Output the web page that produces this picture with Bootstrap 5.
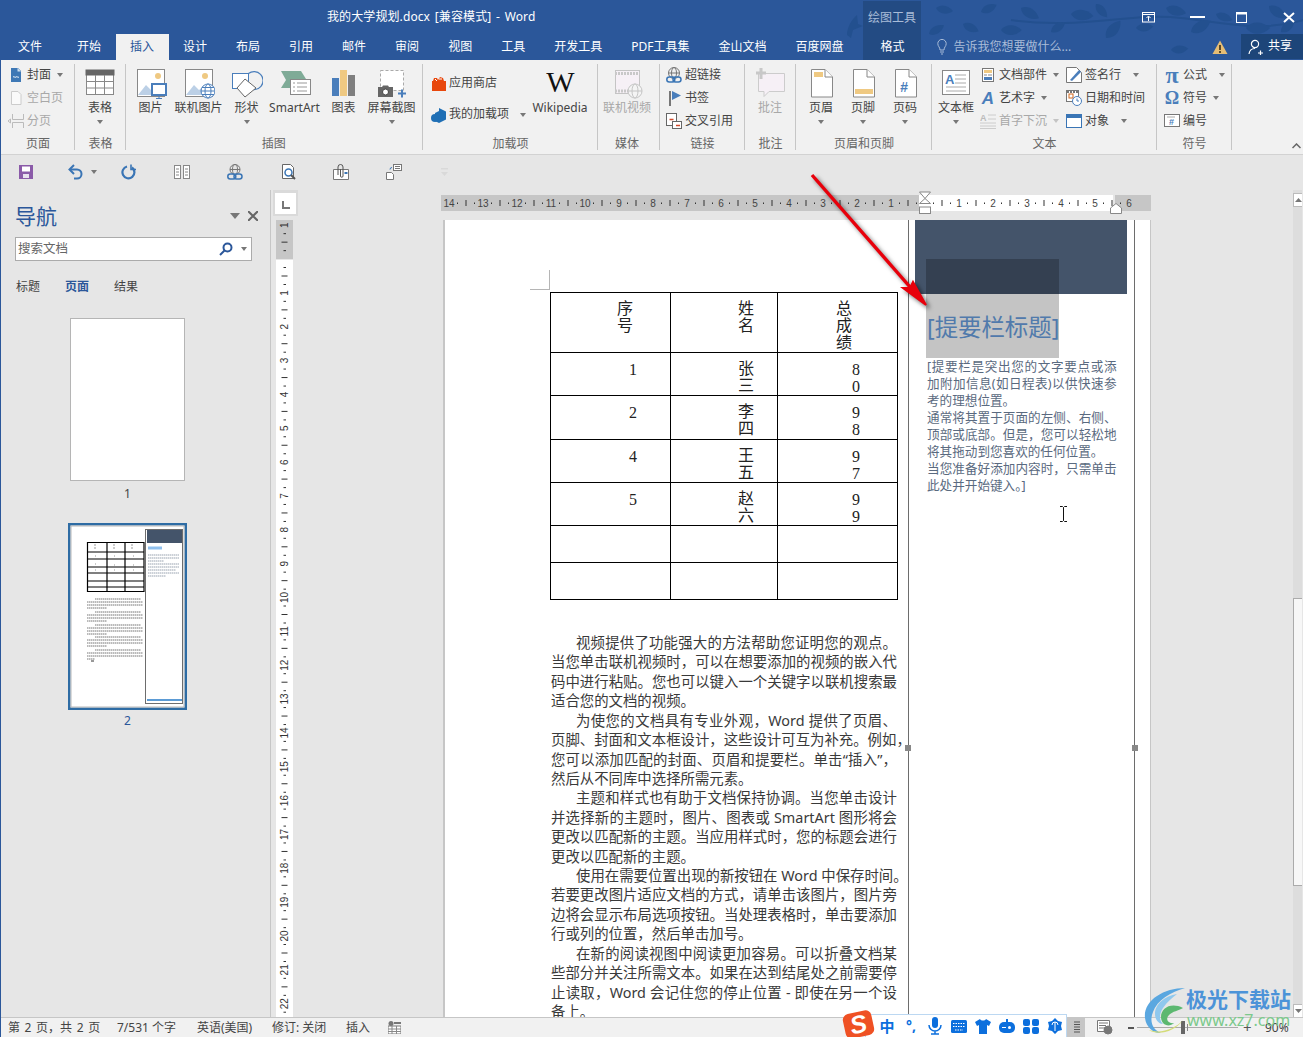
<!DOCTYPE html>
<html lang="zh-CN">
<head>
<meta charset="utf-8">
<title>Word</title>
<link href="https://cdn.jsdelivr.net/npm/bootstrap@5.3.0/dist/css/bootstrap.min.css" rel="stylesheet">
<style>
html,body{margin:0;height:1037px;overflow:hidden}
body{font-family:"Noto Sans","Noto Sans CJK SC",sans-serif;font-size:12px;color:#444;background:#e6e6e6;line-height:1.2}
.win{width:1303px;height:1037px;border-left:1px solid #2b579a;position:relative;overflow:hidden}
.head{height:60px;background:#2b579a;color:#fff;position:relative}
.leaves{position:absolute;left:0;top:0;pointer-events:none}
.trow{height:34px;position:relative}
.ttl{width:862px;padding-left:326px;line-height:33px;white-space:nowrap;letter-spacing:.1px;word-spacing:1.5px}
.toolhd{width:58px;height:33px;margin-top:1px;background:#234b83;color:#a9bcd8;text-align:center;line-height:33px}
.wb1{margin-left:221px}.wb2{margin-left:35px}.wb3{margin-left:31px}.wb4{margin-left:36px}
.tabs{height:26px;position:relative}
.tb{padding:0 14.5px;line-height:25px;white-space:nowrap}
.tb.first{margin-left:2.5px;margin-right:6px}
.tb.on{background:#f1f1f1;color:#2b579a}
.tb.fmt{margin-left:5.5px;width:58px;padding:0;text-align:center;background:#234b83}
.lamp{margin-left:16px}
.tell{margin-left:6px;color:#a9bcd8}
.warn{margin-left:auto;margin-right:13px}
.share{width:62px;height:25px;background:#1d4579;gap:5px;padding-left:7px}
.rib{height:95px;background:#f1f1f1;border-bottom:1px solid #d2d2d2;position:relative}
.grp{height:94px;position:relative;flex:none}
.grp::after{content:"";position:absolute;right:0;top:4px;bottom:4px;width:1px;background:#c6c6c6}
.rbody{height:73px}
.rlab{height:20px;line-height:22px;text-align:center;color:#666}
.g1{width:74px}.g2{width:51px}.g3{width:297px;padding-left:.5px}.g4{width:175px}.g5{width:62px}.g6{width:85px}.g7{width:51px}.g8{width:136px}.g9{width:225px}.g10{width:75px}
.g5 .rlab{padding-right:4px}
.g3 .rlab{padding-right:2px}
.bb{display:flex;flex-direction:column;align-items:center;padding-top:7px;flex:none}
.bi{height:31px;display:flex;justify-content:center}
.bl{height:20px;line-height:20px;white-space:nowrap}
.tri{display:block;width:0;height:0;border-left:3.5px solid transparent;border-right:3.5px solid transparent;border-top:4px solid #777;flex:none}
.bb>.tri{margin-top:2px}
.sr>.tri{margin-left:3px}
.sr>.tri.far{margin-left:8.5px}
.w46{width:46px}.w48{width:48px}.w50{width:50px}.w58{width:58px}.w42{width:42px}
.hgap{margin-left:4px}
.sc{padding-top:3.5px;flex:none}
.sr{height:23px;display:flex;align-items:center;white-space:nowrap;gap:3px}
.sr svg{flex:none}
.sr.tall{height:31px;gap:2px}
.dis{color:#a8a8a8}.dis .tri{border-top-color:#c4c4c4}
.p1{padding-left:7px}.p2{padding-left:8px;padding-top:8px;width:108px}.p3{padding-left:6px}.p4{width:86px}.p5{padding-left:7px}
.wtx{font-family:"Liberation Serif",serif;font-size:30px;line-height:29px;color:#111;padding-left:1px}
.ico{font-family:"Liberation Serif",serif;font-weight:700;font-size:18px;color:#4a7ebb;width:16px;text-align:center;line-height:1}
.ico.big{font-size:24px;line-height:16px}
.ico.wa{font-family:"Liberation Sans",sans-serif;font-style:italic;font-size:17px}
.chev{position:absolute;left:1291px;top:83px}
.qat{height:35px;background:#e6e6e6;padding-bottom:2px}
.qat>:nth-child(1){margin-left:17px}.qat>:nth-child(2){margin-left:34px}.qat>:nth-child(3){margin-left:7px}.qat>:nth-child(4){margin-left:24px}.qat>:nth-child(5){margin-left:37px}.qat>:nth-child(6){margin-left:37px}.qat>:nth-child(7){margin-left:38px}.qat>:nth-child(8){margin-left:36px}.qat>:nth-child(9){margin-left:37px}.qat>:nth-child(10){margin-left:39px}
.main{height:827px;overflow:hidden}
.nav-pane{width:270px;flex:none;border-right:1px solid #c6c6c6;padding-top:14px;height:827px}
.nhd{height:24px;padding-left:14px;color:#2b579a;font-size:21px;line-height:24px;width:257px}
.nsearch{margin:9px 0 0 14px;width:237px;height:24px;background:#fff;border:1px solid #ababab;padding:0 4px 0 2px;color:#666;font-size:12.5px;line-height:22px}
.ntabs{margin-top:15px;height:20px;line-height:22px;padding-left:15px;gap:25px}
.ntabs b{color:#2b579a}
.thumbs{width:253px;display:flex;flex-direction:column;align-items:center}
.th1{margin-top:22px;width:115px;height:163px;background:#fff;border:1px solid #b5b5b5}
.thn{height:24px;line-height:26px}
.th2{margin-top:18px;height:187px;width:119px}
.thn2{height:20px;line-height:22px;color:#2b579a}
.vrul{width:29px;flex:none;height:827px;position:relative}
.corner{margin:0 0 4px 2px;width:25px;height:26px;background:#dadada;padding:3px 2px 2px 2px}
.cornerin{background:#fff;height:21px;width:21px;position:relative}
.cornerin::before{content:"";position:absolute;left:7px;top:8px;width:8px;height:8px;border-left:2px solid #777;border-bottom:2px solid #777}
.vrs{margin-left:5px;display:block}
.dv{width:993px;flex:none;padding:5px 0 0 141px;height:827px;overflow:hidden}
.hr-svg{display:block;overflow:visible}
.page{margin:9px 0 0 2px;width:708px;height:797px;background:#fff;border-left:2px solid #c6c6c6;border-right:1px solid #c6c6c6}
.pl{width:463px;flex:none;padding:72px 0 0 105px;position:relative;font-size:14.4px;color:#3a3a3a}
.crop{position:absolute;left:85px;top:50px;width:20px;height:20px;border-right:1px solid #b5b5b5;border-bottom:1px solid #b5b5b5}
.dtb{width:348px;table-layout:fixed;margin:0;--bs-table-border-color:#000;--bs-table-color:#222;--bs-table-bg:transparent;font-size:16px;line-height:17px;border-color:#000}
.dtb>tbody>tr>td{padding:7px 0 0 0;vertical-align:top;border:1px solid #000;white-space:nowrap}
.dtb td.c1{width:120px;padding-left:66px}
.dtb td.c2{width:107px;padding-left:67px}
.dtb td.c3{width:120px;padding-left:58px}
.dtb>tbody>tr>td.d1{padding:8px 0 0 78px;font-family:"Liberation Serif",serif}
.dtb>tbody>tr>td.d3{padding:8px 0 0 74px;font-family:"Liberation Serif",serif}
.r0{height:60px}.r1{height:43px}.r2{height:44px}.r3{height:37px}
.txt{margin-top:33px;line-height:19.42px;margin-left:1px;width:346px}
.ln{text-align:justify;text-align-last:justify}
.ind{margin-left:25px}
.ov{white-space:nowrap;text-align:left;text-align-last:left}
.end{text-align:left;text-align-last:left}
.side{width:227px;flex:none;border-left:1px solid #6d6d6d;border-right:1px solid #6d6d6d;position:relative;height:797px}
.sdark{margin-left:6px;width:212px;height:74px;background:#44546a}
.stitle{height:64px;line-height:67px;padding-left:18px;font-size:23.4px;color:#6a9fe0;white-space:nowrap}
.sbody{margin-left:18px;width:189.5px;font-size:12.6px;line-height:17px;color:#5a6a80}
.sel{position:absolute;left:17px;top:39px;width:133px;height:99px;background:rgba(0,0,0,.23)}
.hnd{position:absolute;top:525px;width:6px;height:6px;background:#888}
.hnd.l{left:-4px}.hnd.r{right:-4px}
.beam{position:absolute;left:150px;top:286px}
.sb{width:9px;flex:none;height:827px;background:#ddd;padding-top:3px}
.sbb{height:14px;background:#fff;border:1px solid #bbb;border-right:0}
.sbsp{height:391px}
.sbsp2{height:118px}
.sbt{height:288px;background:#f7f7f7;border:1px solid #ababab;border-right:0}
.stat{height:20px;background:#f1f1f1;border-top:1px solid #c6c6c6;line-height:19px;white-space:nowrap;color:#444}
.stat>span:nth-child(1){margin-left:7px;width:109px;word-spacing:1.5px}.stat>span:nth-child(2){width:80px}.stat>span:nth-child(3){width:75px}.stat>span:nth-child(4){width:74px}.stat>span:nth-child(5){width:42px}
.vact{width:25px;height:19px;background:#c6c6c6;margin-left:auto}
.sweb{margin-left:12px}
.sminus{margin-left:15px;width:6px;height:2px;background:#555}
.slid{margin-left:3px;width:101px;height:1px;background:#aaa;position:relative}
.slid::before{content:"";position:absolute;left:44px;top:-6px;width:4px;height:13px;background:#666}
.slid::after{content:"";position:absolute;left:50px;top:-3px;width:1px;height:7px;background:#888}
.splus{margin-left:5px;font-size:15px;line-height:1;color:#555;width:8px}
.spct{margin:0 12px 0 14px;width:26px}
.arrow{position:absolute;left:-1px;top:0;pointer-events:none;filter:drop-shadow(3px 3px 2px rgba(0,0,0,.55))}
.ime{position:absolute;left:864px;top:1014px;width:202px;height:23px;background:#fff;border:1px solid #bcd8f2;border-bottom:0;padding-left:13px;gap:8px;color:#0c6fdd}
.ime b{font-size:15px;width:16px;text-align:center;line-height:1}
.ime span{width:16px;font-weight:700;font-size:14px;line-height:1;text-align:center}
.sglogo{position:absolute;left:843px;top:1012px;width:29px;height:25px;background:#ef5124;border-radius:6px;transform:rotate(-12deg);color:#fff;font:italic 700 25px/24px "Liberation Sans",sans-serif;text-align:center}
.wm{position:absolute;left:1142px;top:986px;pointer-events:none}
.wm1{font-family:"Noto Sans CJK SC",sans-serif;font-weight:700;font-size:21px;line-height:25px;color:#4c93d8;white-space:nowrap;margin-left:-1px}
.wm2{font-family:"Noto Sans",sans-serif;font-size:16px;line-height:19px;color:#7cc98c;white-space:nowrap}
</style>
</head>
<body>
<div class="win">
<header class="head">
<svg class="leaves" width="1303" height="60" fill="#23508f"><defs><path id="lf" d="M0 0C3-6 11-7 17-3C13 3 5 5 0 0z"/></defs><path d="M1010 20C1080 30 1130 12 1180 18S1260 32 1303 20" fill="none" stroke="#23508f" stroke-width="2"/><path d="M846 35C846 28 850 20 856 15L857 24L862 26L852 30L850 38z"/><use href="#lf" transform="translate(935 8) rotate(20)"/><use href="#lf" transform="translate(928 34) rotate(-20)"/><use href="#lf" transform="translate(962 24) rotate(35)"/><use href="#lf" transform="translate(980 12) rotate(-15)"/><use href="#lf" transform="translate(1000 30) rotate(10) scale(1.2)"/><use href="#lf" transform="translate(1020 8) rotate(40) scale(1.2)"/><use href="#lf" transform="translate(1050 32) rotate(-25)"/><use href="#lf" transform="translate(1070 14) rotate(15) scale(1.3)"/><use href="#lf" transform="translate(1095 4) rotate(60)"/><use href="#lf" transform="translate(1105 38) rotate(-40) scale(1.3)"/><use href="#lf" transform="translate(1135 28) rotate(5)"/><use href="#lf" transform="translate(1165 8) rotate(25) scale(1.2)"/><use href="#lf" transform="translate(1190 32) rotate(-20) scale(1.3)"/><use href="#lf" transform="translate(1215 14) rotate(30)"/><use href="#lf" transform="translate(1245 28) rotate(10) scale(1.4)"/><use href="#lf" transform="translate(1268 6) rotate(45) scale(1.2)"/><use href="#lf" transform="translate(1280 32) rotate(-30)"/><use href="#lf" transform="translate(1005 48) rotate(-10)"/><use href="#lf" transform="translate(1170 50) rotate(5)"/></svg>
<div class="trow d-flex">
<div class="ttl">我的大学规划.docx [兼容模式] - Word</div>
<div class="toolhd">绘图工具</div>
<svg class="wb1 align-self-center" width="13" height="11" viewBox="0 0 13 11" fill="none" stroke="#fff"><rect x=".5" y=".5" width="12" height="9.5"/><path d="M.5 2.5h12M6.5 9V4.5M4.5 6l2-2 2 2"/></svg>
<svg class="wb2 align-self-center" width="15" height="3"><rect width="15" height="2" y="0" fill="#fff"/></svg>
<svg class="wb3 align-self-center" width="11" height="11" fill="none" stroke="#fff"><rect x=".5" y=".5" width="10" height="10"/><path d="M0 1.5h11" stroke-width="2"/></svg>
<svg class="wb4 align-self-center" width="12" height="11" stroke="#fff" stroke-width="2"><path d="M1 1l10 9M11 1L1 10"/></svg>
</div>
<nav class="tabs d-flex">
<div class="tb first">文件</div><div class="tb">开始</div><div class="tb on">插入</div><div class="tb">设计</div><div class="tb">布局</div><div class="tb">引用</div><div class="tb">邮件</div><div class="tb">审阅</div><div class="tb">视图</div><div class="tb">工具</div><div class="tb">开发工具</div><div class="tb">PDF工具集</div><div class="tb">金山文档</div><div class="tb">百度网盘</div>
<div class="tb fmt">格式</div>
<svg class="lamp align-self-center" width="10" height="16" viewBox="0 0 10 16" fill="none" stroke="#a9bcd8"><path d="M3 11C3 8 .8 7.5.8 4.6A4.2 4.2 0 0 1 9.2 4.6C9.2 7.5 7 8 7 11z"/><path d="M3 13h4M4 15h2"/></svg>
<div class="tell align-self-center">告诉我您想要做什么...</div>
<svg class="warn align-self-center" width="16" height="14"><path d="M8 .5L15.5 14H.5z" fill="#e6bd74"/><rect x="7" y="5" width="2" height="5" fill="#5a4a2a"/><rect x="7" y="11" width="2" height="2" fill="#5a4a2a"/></svg>
<div class="share d-flex align-items-center"><svg width="15" height="16" viewBox="0 0 15 16" fill="none" stroke="#fff" stroke-width="1.2"><circle cx="7" cy="5" r="3.6"/><path d="M1 15C1.500 11 4 9.500 7 9.500M10 14h5M12.500 11.500v5"/></svg><span>共享</span></div>
</nav>
</header>

<section class="rib d-flex">
<div class="grp g1"><div class="rbody sc p1">
<div class="sr"><svg width="16" height="16"><path d="M3 1h7l3 3v11H3z" fill="#3e78b5"/><path d="M9.500 1v3.500H13" fill="#cfe0f0"/><path d="M5 10c1-1 2 1 3 0s2 1 3 0" stroke="#fff" fill="none"/></svg><span>封面</span><i class="tri"></i></div>
<div class="sr dis"><svg width="16" height="16" fill="#fafafa" stroke="#ccc"><path d="M3.500 1.500h6.500l3 3v10h-9.500z"/></svg><span>空白页</span></div>
<div class="sr dis"><svg width="16" height="16" fill="none" stroke="#bbb"><path d="M4.500 1v5.500h11V1M4.500 15v-5.500h11V15M0 8l2.500-2v4z"/></svg><span>分页</span></div>
</div><div class="rlab">页面</div></div>

<div class="grp g2"><div class="rbody d-flex"><div class="bb w50"><div class="bi"><svg width="30" height="28" viewBox="0 0 30 28" fill="#fff" stroke="#888"><rect x="1.500" y="3.500" width="27" height="24"/><rect x="1" y="3" width="28" height="5" fill="#666" stroke="#666"/><path d="M1.500 14.500h27M1.500 21h27M10.500 8v19M19.500 8v19" fill="none"/></svg></div><div class="bl">表格</div><i class="tri"></i></div></div><div class="rlab">表格</div></div>

<div class="grp g3"><div class="rbody d-flex">
<div class="bb w48"><div class="bi"><svg width="32" height="32"><rect x="2.500" y="2.500" width="27" height="27" fill="#fff" stroke="#888"/><path d="M3 28l8-10 5 5 4-3 5 8z" fill="#bcd0e6"/><circle cx="23" cy="9" r="3" fill="#efc982"/><rect x="17" y="17" width="14" height="11" fill="#fff" stroke="#4a7ebb" stroke-width="2"/><path d="M21 31.500h6M24 28v3" stroke="#4a7ebb"/></svg></div><div class="bl">图片</div></div>
<div class="bb w48"><div class="bi"><svg width="32" height="32"><rect x="2.500" y="2.500" width="27" height="27" fill="#fff" stroke="#888"/><path d="M3 28l8-10 5 5 4-3 5 8z" fill="#bcd0e6"/><circle cx="22" cy="9" r="3" fill="#efc982"/><g fill="#fff" stroke="#4a7ebb"><circle cx="25" cy="24" r="7"/><ellipse cx="25" cy="24" rx="3" ry="7"/><path d="M18 24h14M19 20.500h12M19 27.500h12"/></g></svg></div><div class="bl">联机图片</div></div>
<div class="bb w48"><div class="bi"><svg width="32" height="32" fill="#fff"><rect x="1.500" y="6.500" width="16" height="15" stroke="#4a7ebb"/><path d="M17.500 6.500A9 9 0 1 1 18 21" fill="none" stroke="#4a7ebb" stroke-width="1.200"/><path d="M14 12l11 9-11 9-8-9z" stroke="#666"/></svg></div><div class="bl">形状</div><i class="tri"></i></div>
<div class="bb w48"><div class="bi"><svg width="32" height="32"><path d="M2 4h20l5 8-5 9H2l5-8z" fill="#7fab97"/><rect x="11.500" y="12.500" width="20" height="15" fill="#fff" stroke="#888"/><path d="M14 16h2M18 16h10M14 20h2M18 20h10M14 24h2M18 24h10" stroke="#999"/></svg></div><div class="bl">SmartArt</div></div>
<div class="bb w50"><div class="bi"><svg width="32" height="32"><rect x="4" y="11" width="7" height="18" fill="#4a7ebb"/><rect x="12" y="3" width="7" height="26" fill="#efc982"/><rect x="20" y="8" width="7" height="21" fill="#7f7f7f"/></svg></div><div class="bl">图表</div></div>
<div class="bb w46"><div class="bi"><svg width="32" height="32"><rect x="4.500" y="3.500" width="23" height="20" fill="#fff" stroke="#aaa" stroke-dasharray="3 2"/><path d="M2 20h4l1-1.500h5l1 1.500h4v10H2z" fill="#666"/><circle cx="9.500" cy="25" r="3" fill="#fff" stroke="#444"/><path d="M22 26.500h8M26 22.500v8" stroke="#4a7ebb" stroke-width="2"/></svg></div><div class="bl">屏幕截图</div><i class="tri"></i></div>
</div><div class="rlab">插图</div></div>

<div class="grp g4"><div class="rbody d-flex">
<div class="sc p2">
<div class="sr tall"><svg width="16" height="16"><path d="M1 5h14v10H1z" fill="#e8470c"/><path d="M2 5l1-3h3l1 2 2-3 3 1 1 3" fill="#e8470c"/><path d="M4 3l2 2M8 3h3" stroke="#fff"/></svg><span>应用商店</span></div>
<div class="sr tall"><svg width="16" height="16"><path d="M8 1l7 3.500v8L8 16 4 14V6L8 4z" fill="#1f6fb5"/><circle cx="4" cy="11" r="4" fill="#1f6fb5"/></svg><span>我的加载项</span><i class="tri far"></i></div>
</div>
<div class="bb w58"><div class="bi wtx">W</div><div class="bl">Wikipedia</div></div>
</div><div class="rlab">加载项</div></div>

<div class="grp g5"><div class="rbody d-flex"><div class="bb w58 dis"><div class="bi"><svg width="32" height="32" fill="#f6f0f6" stroke="#c4c4c4"><rect x="4.500" y="3.500" width="24" height="23"/><path d="M4 6.500h25M4 24h25" stroke-width="3" stroke-dasharray="2 1" stroke="#c8c8c8"/><g fill="#f4f4f4"><circle cx="24" cy="24" r="7"/><ellipse cx="24" cy="24" rx="3" ry="7"/><path d="M17 24h14"/></g></svg></div><div class="bl">联机视频</div></div></div><div class="rlab">媒体</div></div>

<div class="grp g6"><div class="rbody sc p3">
<div class="sr"><svg width="16" height="16" fill="none"><g stroke="#777"><circle cx="8" cy="6" r="5.500"/><ellipse cx="8" cy="6" rx="2.500" ry="5.500"/><path d="M2.500 6h11"/></g><g stroke="#3a75b5" stroke-width="1.500"><rect x=".8" y="10" width="8" height="5" rx="2.500"/><rect x="7" y="10" width="8" height="5" rx="2.500"/></g></svg><span>超链接</span></div>
<div class="sr"><svg width="16" height="16"><rect x="3" y="1" width="2" height="15" fill="#777"/><path d="M6 1l9 4.500L6 10z" fill="#4a7ebb"/></svg><span>书签</span></div>
<div class="sr"><svg width="16" height="16" fill="#fff" stroke="#666"><rect x=".5" y=".5" width="10" height="12"/><rect x="6.500" y="8.500" width="9" height="7"/><path d="M3.500 6.500h4M10 12.500h4" stroke="#d2492a" stroke-width="1.500"/></svg><span>交叉引用</span></div>
</div><div class="rlab">链接</div></div>

<div class="grp g7"><div class="rbody d-flex"><div class="bb w50 dis"><div class="bi"><svg width="32" height="32"><path d="M4.500 6.500h26v18H15l-5 5v-5H4.500z" fill="#f6f0f6" stroke="#ccc"/><path d="M2 6h10M7 1v11" stroke="#c8c8c8" stroke-width="3"/></svg></div><div class="bl">批注</div></div></div><div class="rlab">批注</div></div>

<div class="grp g8"><div class="rbody d-flex hgap">
<div class="bb w42"><div class="bi"><svg width="32" height="32" fill="#fff" stroke="#888"><path d="M6.500 2.500H20l7.500 7.500v20H6.500z"/><path d="M20 2.500V10h7.500"/><rect x="9" y="5" width="9" height="5" fill="#efc982" stroke="none"/></svg></div><div class="bl">页眉</div><i class="tri"></i></div>
<div class="bb w42"><div class="bi"><svg width="32" height="32" fill="#fff" stroke="#888"><path d="M6.500 2.500H20l7.500 7.500v20H6.500z"/><path d="M20 2.500V10h7.500"/><rect x="8" y="22" width="18" height="5" fill="#efc982" stroke="none"/></svg></div><div class="bl">页脚</div><i class="tri"></i></div>
<div class="bb w42"><div class="bi"><svg width="32" height="32" fill="#fff" stroke="#888"><path d="M6.500 2.500H20l7.500 7.500v20H6.500z"/><path d="M20 2.500V10h7.500"/><text x="11" y="25" font-family="Liberation Sans" font-weight="700" font-style="italic" font-size="14" fill="#4a7ebb" stroke="none">#</text></svg></div><div class="bl">页码</div><i class="tri"></i></div>
</div><div class="rlab">页眉和页脚</div></div>

<div class="grp g9"><div class="rbody d-flex">
<div class="bb w48"><div class="bi"><svg width="32" height="32"><rect x="2.500" y="3.500" width="27" height="24" fill="#fff" stroke="#888"/><text x="5" y="17" font-family="Liberation Sans" font-weight="700" font-size="13" fill="#4a7ebb">A</text><path d="M15 8h11M15 12h11M15 16h11M6 20h20M6 24h20" stroke="#aaa"/></svg></div><div class="bl">文本框</div><i class="tri"></i></div>
<div class="sc p4">
<div class="sr"><svg width="16" height="16"><rect x="2.500" y="1.500" width="11" height="13" fill="#fff" stroke="#777"/><rect x="4" y="3" width="8" height="3" fill="#efc982"/><path d="M4 8h3M8 8h4" stroke="#888"/><rect x="4" y="10" width="8" height="3" fill="#4a7ebb"/></svg><span>文档部件</span><i class="tri"></i></div>
<div class="sr"><span class="ico wa">A</span><span>艺术字</span><i class="tri"></i></div>
<div class="sr dis"><svg width="16" height="16"><text x="0" y="8" font-family="Liberation Sans" font-weight="700" font-size="9" fill="#bbb">A</text><path d="M8 2h8M8 6h8M0 10h16M0 13h16M0 15.500h16" stroke="#ccc"/></svg><span>首字下沉</span><i class="tri"></i></div>
</div>
<div class="sc">
<div class="sr"><svg width="16" height="16"><path d="M.5 .5h10l5 5v10H.5z" fill="#fff" stroke="#777"/><path d="M4 13L13 3l2 2-9 9z" fill="#4a7ebb"/></svg><span>签名行</span><i class="tri far"></i></div>
<div class="sr"><svg width="16" height="16"><rect x=".5" y=".5" width="12" height="11" fill="#fff" stroke="#777"/><path d="M1 2h11" stroke="#777" stroke-width="2" stroke-dasharray="2 1"/><rect x="3" y="4" width="4" height="4" fill="none" stroke="#d2691e"/><circle cx="11" cy="11" r="4.500" fill="#fff" stroke="#4a7ebb"/><path d="M11 8.500V11h2" stroke="#4a7ebb" fill="none"/></svg><span>日期和时间</span></div>
<div class="sr"><svg width="16" height="16"><rect x=".5" y="1.500" width="15" height="13" fill="#fff" stroke="#3a75b5"/><rect y="1" width="16" height="4" fill="#3a75b5"/></svg><span>对象</span><i class="tri far"></i></div>
</div>
</div><div class="rlab">文本</div></div>

<div class="grp g10"><div class="rbody sc p5">
<div class="sr"><span class="ico big">π</span><span>公式</span><i class="tri far"></i></div>
<div class="sr"><span class="ico">Ω</span><span>符号</span><i class="tri"></i></div>
<div class="sr"><svg width="16" height="16"><rect x=".5" y="1.500" width="15" height="12" fill="#fff" stroke="#777"/><path d="M3 4h8" stroke="#aaa"/><text x="5" y="12" font-family="Liberation Sans" font-weight="700" font-size="9" fill="#4a7ebb">#</text></svg><span>编号</span></div>
</div><div class="rlab">符号</div></div>
<svg class="chev" width="9" height="6" fill="none" stroke="#666" stroke-width="1.500"><path d="M.5 5L4.500 1l4 4"/></svg>
</section>

<div class="qat d-flex align-items-center">
<svg width="16" height="16"><path d="M1 1h14v14H1z" fill="#8a5aa8"/><rect x="4" y="2.500" width="8" height="5" fill="#fff"/><rect x="5" y="10" width="6" height="4" fill="#e8e0ee"/></svg>
<svg width="16" height="16" fill="none" stroke="#3a75b5" stroke-width="2"><path d="M6 1L1.500 5.500 6 10"/><path d="M2 5.500h7a4.500 4.500 0 0 1 0 9H6"/></svg>
<i class="tri"></i>
<svg width="16" height="16" fill="none" stroke="#3a75b5" stroke-width="2.200"><path d="M6 2.500a6 6 0 1 0 5 1"/><path d="M10 .5v5h5" stroke-width="1.600"/></svg>
<svg width="16" height="14" fill="#fff" stroke="#888"><rect x=".5" y=".5" width="6" height="13"/><rect x="9.500" y=".5" width="6" height="13"/><path d="M2 4h3M2 7h3M2 10h3M11 4h3M11 7h3M11 10h3"/></svg>
<svg width="16" height="16" fill="none"><g stroke="#777"><circle cx="8" cy="5.500" r="5"/><ellipse cx="8" cy="5.500" rx="2.500" ry="5"/><path d="M3 5.500h10"/></g><g stroke="#3a75b5" stroke-width="1.500"><rect x=".8" y="10" width="8" height="5" rx="2.500"/><rect x="7" y="10" width="8" height="5" rx="2.500"/></g></svg>
<svg width="16" height="16" fill="#fff" stroke="#666"><path d="M1.500 .5h8l3 3v11h-11z"/><circle cx="7.500" cy="8.500" r="3.500" stroke="#3a75b5" stroke-width="1.500"/><path d="M10 11l4 4" stroke="#555" stroke-width="2"/></svg>
<svg width="16" height="16" fill="none" stroke="#777"><path d="M.5 5.500h15v10H.5z" fill="#fff"/><path d="M5 11V3a2.500 2.500 0 0 1 5 0v9a1.200 1.200 0 0 1-2.500 0V5" stroke="#555"/><rect x="11.500" y="8" width="3" height="2" fill="#3a75b5" stroke="none"/></svg>
<svg width="16" height="16" fill="none" stroke="#777"><rect x="7.500" y=".5" width="8" height="6" fill="#fff"/><path d="M9 2.500h5M9 4.500h5"/><path d="M.5 8.500h5l2 2v5h-7z" fill="#fff"/><path d="M4 5.500a2 2 0 0 1 2-2" stroke="#3a75b5"/></svg>
<svg width="7" height="8" fill="#d9d9d9"><path d="M0 4h7L3.500 8zM0 0h7v1.500H0z"/></svg>
</div>

<main class="main d-flex">
<aside class="nav-pane">
<div class="nhd d-flex align-items-center"><span>导航</span><svg class="ms-auto" width="10" height="6" fill="#777"><path d="M0 0h10L5 6z"/></svg><svg class="ms-2" width="10" height="10" stroke="#666" stroke-width="2"><path d="M0 0l10 10M10 0L0 10"/></svg></div>
<div class="nsearch d-flex align-items-center"><span>搜索文档</span><svg class="ms-auto" width="14" height="14" fill="none" stroke="#2b579a" stroke-width="2"><circle cx="8.500" cy="5.500" r="4"/><path d="M5.500 8.500L1 13"/></svg><svg class="ms-2" width="6" height="4" fill="#777"><path d="M0 0h6L3 4z"/></svg></div>
<div class="ntabs d-flex"><span>标题</span><b>页面</b><span>结果</span></div>
<div class="thumbs">
<div class="th1"></div><div class="thn">1</div>
<svg class="th2" viewBox="0 0 119 187" width="119" height="187">
<rect x="1.250" y="1.250" width="116.500" height="184.500" fill="#fff" stroke="#2e6ca4" stroke-width="2.500"/>
<rect x="3" y="3" width="113" height="181" fill="none" stroke="#b8b8b8"/>
<rect x="77.500" y="6.500" width="37" height="174" fill="none" stroke="#6d6d6d"/>
<rect x="79" y="7" width="35" height="13" fill="#44546a"/>
<rect x="79" y="176" width="35" height="2" fill="#5b9bd5"/>
<path d="M19.500 19.500h56.500v49h-56.500zM19 29h57M19 36h57M19 44h57M19 50h57M19 58h57M19 64h57M39 20v48M57 20v48" fill="none" stroke="#000" stroke-width="1.200"/>
<path d="M80 25h14" stroke="#8fc0ee" stroke-width="3"/>
<path d="M80 32h31M80 35h31M80 38h16M80 41h31M80 44h31M80 47h28M80 50h31M80 53h18" stroke="#99a3b0" stroke-dasharray="1.500 .5"/>
<path d="M26 22h2M26 25h2M45 22h2M45 25h2M63 22h2M63 25h2M27 33h1M46 33h1M46 42h1M65 33h1M65 42h1M27 41h1M27 47h1M46 47h1M65 47h1" stroke="#999"/>
<path d="M27 76h46M19 79h56M19 82h56M19 85h20M27 89h46M19 92h56M19 95h56M19 98h20M27 102h46M19 105h56M19 108h56M19 111h20M27 114h46M19 117h56M19 120h56M19 123h20M27 127h46M19 130h56M19 133h56M19 136h8" stroke="#777" stroke-dasharray="1.500 .5"/>
<path d="M23 138h3" stroke="#333"/>
</svg>
<div class="thn2">2</div>
</div>
</aside>
<div class="vrul">
<div class="corner"><div class="cornerin"></div></div>
<svg class="vrs" id="vrs" width="17" height="797"></svg>
</div>
<div class="dv">
<svg class="hr-svg" id="hrs" width="710" height="16"></svg>
<div class="page d-flex">
<div class="pl">
<div class="crop"></div>
<table class="table table-bordered dtb">
<tbody>
<tr class="r0"><td class="c1">序<br>号</td><td class="c2">姓<br>名</td><td class="c3">总<br>成<br>绩</td></tr>
<tr class="r1"><td class="c1 d1">1</td><td class="c2">张<br>三</td><td class="c3 d3">8<br>0</td></tr>
<tr class="r2"><td class="c1 d1">2</td><td class="c2">李<br>四</td><td class="c3 d3">9<br>8</td></tr>
<tr class="r1"><td class="c1 d1">4</td><td class="c2">王<br>五</td><td class="c3 d3">9<br>7</td></tr>
<tr class="r1"><td class="c1 d1">5</td><td class="c2">赵<br>六</td><td class="c3 d3">9<br>9</td></tr>
<tr class="r3"><td class="c1"></td><td class="c2"></td><td class="c3"></td></tr>
<tr class="r3"><td class="c1"></td><td class="c2"></td><td class="c3"></td></tr>
</tbody>
</table>
<div class="txt">
<div class="ln ind">视频提供了功能强大的方法帮助您证明您的观点。</div>
<div class="ln">当您单击联机视频时，可以在想要添加的视频的嵌入代</div>
<div class="ln">码中进行粘贴。您也可以键入一个关键字以联机搜索最</div>
<div class="end">适合您的文档的视频。</div>
<div class="ln ind">为使您的文档具有专业外观，Word 提供了页眉、</div>
<div class="ov">页脚、封面和文本框设计，这些设计可互为补充。例如，</div>
<div class="ln">您可以添加匹配的封面、页眉和提要栏。单击“插入”，</div>
<div class="end">然后从不同库中选择所需元素。</div>
<div class="ln ind">主题和样式也有助于文档保持协调。当您单击设计</div>
<div class="ln">并选择新的主题时，图片、图表或 SmartArt 图形将会</div>
<div class="ln">更改以匹配新的主题。当应用样式时，您的标题会进行</div>
<div class="end">更改以匹配新的主题。</div>
<div class="ov ind">使用在需要位置出现的新按钮在 Word 中保存时间。</div>
<div class="ln">若要更改图片适应文档的方式，请单击该图片，图片旁</div>
<div class="ln">边将会显示布局选项按钮。当处理表格时，单击要添加</div>
<div class="end">行或列的位置，然后单击加号。</div>
<div class="ln ind">在新的阅读视图中阅读更加容易。可以折叠文档某</div>
<div class="ln">些部分并关注所需文本。如果在达到结尾处之前需要停</div>
<div class="ln">止读取，Word 会记住您的停止位置 - 即使在另一个设</div>
<div class="end">备上。</div>
</div>
</div>
<div class="side">
<div class="sdark"></div>
<div class="stitle">[提要栏标题]</div>
<div class="sbody"><div class="ln">[提要栏是突出您的文字要点或添</div><div class="ln">加附加信息(如日程表)以供快速参</div><div class="end">考的理想位置。</div><div class="ln">通常将其置于页面的左侧、右侧、</div><div class="ln">顶部或底部。但是，您可以轻松地</div><div class="end">将其拖动到您喜欢的任何位置。</div><div class="ln">当您准备好添加内容时，只需单击</div><div class="end">此处并开始键入。]</div></div>
<div class="sel"></div>
<i class="hnd l"></i><i class="hnd r"></i>
<svg class="beam" width="9" height="16" fill="none" stroke="#111"><path d="M1 .5h2.500l1 1 1-1H8M4.500 1.500v13M1 15.500h2.500l1-1 1 1H8"/></svg>
</div>
</div>
</div>
<div class="sb">
<div class="sbb d-flex align-items-center justify-content-center"><svg width="7" height="4" fill="#777"><path d="M0 4h7L3.500 0z"/></svg></div>
<div class="sbsp"></div>
<div class="sbt"></div>
<div class="sbsp2"></div>
<div class="sbb d-flex align-items-center justify-content-center"><svg width="7" height="4" fill="#777"><path d="M0 0h7L3.500 4z"/></svg></div>
</div>
</main>

<footer class="stat d-flex align-items-center">
<span>第 2 页，共 2 页</span><span>7/531 个字</span><span>英语(美国)</span><span>修订: 关闭</span><span>插入</span>
<svg width="13" height="13" fill="#777"><circle cx="3" cy="2.500" r="2.500"/><rect x="6" y="1" width="7" height="2"/><rect y="5" width="13" height="8" fill="#fff" stroke="#777"/><path d="M0 8h13M0 10.500h13M4 5v8M8.500 5v8" stroke="#888"/></svg>
<div class="vact d-flex align-items-center justify-content-end"><svg width="17" height="13" fill="none" stroke="#555"><path d="M6 1h6M6 3.500h6M6 6h6M6 8.500h6M6 11h6"/></svg></div>
<svg class="sweb" width="16" height="15" fill="#fff" stroke="#777"><path d="M.5 .5h12v11H.5z"/><path d="M2 3h9M2 5.500h7M2 8h6"/><circle cx="11" cy="10" r="4" fill="#777"/></svg>
<i class="sminus"></i><i class="slid"></i><span class="splus">+</span><span class="spct">90%</span>
</footer>

<svg class="arrow" width="1303" height="1037"><path d="M812 175L917 295" stroke="#e8000b" stroke-width="3.400"/><path d="M926 305L903 288 910 288 913 282z" fill="#e8000b" stroke="#e8000b" stroke-width="2"/></svg>

<div class="ime d-flex align-items-center">
<b>中</b><span>°,</span>
<svg width="16" height="18" viewBox="0 0 16 18" fill="currentColor"><rect x="5" y="0" width="6" height="11" rx="3"/><path d="M2 8a6 6 0 0 0 12 0M8 14v3M4 17h8" fill="none" stroke="currentColor" stroke-width="1.500"/></svg>
<svg width="16" height="13" viewBox="0 0 16 13" fill="currentColor"><rect width="16" height="13" rx="1.500"/><path d="M2 3.500h12M2 6.500h12M4 10h8" stroke="#fff" stroke-dasharray="1.500 1" fill="none"/></svg>
<svg width="16" height="15" viewBox="0 0 16 15" fill="currentColor"><path d="M5 0L0 3l2 4 2-1v9h8V6l2 1 2-4-5-3C10 2 6 2 5 0z"/></svg>
<svg width="16" height="14" viewBox="0 0 16 14" fill="currentColor"><rect y="3" width="16" height="11" rx="5"/><rect x="7" y="0" width="2" height="4"/><circle cx="10.500" cy="8.500" r="1.500" fill="#fff"/><path d="M3 8.500h4" stroke="#fff"/></svg>
<svg width="16" height="15" viewBox="0 0 16 15" fill="currentColor"><rect width="7" height="7" rx="2"/><rect x="9" width="7" height="7" rx="2"/><rect y="8" width="7" height="7" rx="2"/><rect x="9" y="8" width="7" height="7" rx="2"/></svg>
<svg width="16" height="16" viewBox="0 0 16 16" fill="currentColor"><path d="M8 0l3 3 4 1-1 4 1 4-4 1-3 3-3-3-4-1 1-4-1-4 4-1z"/><path d="M8 4v9M5 7a3 3 0 0 1 6 0" stroke="#fff" fill="none"/></svg>
</div>
<div class="sglogo">S</div>

<div class="wm d-flex">
<svg width="44" height="50"><path d="M42 2C20 2 0 15 2 32C3 42 12 48 18 47C10 44 6 36 10 26C14 14 28 6 42 2z" fill="#5aa7e0"/><path d="M34 8C22 10 12 18 12 28C12 34 16 38 20 38C16 34 16 28 20 22C24 16 29 12 34 8z" fill="#8fc8ee"/><path d="M40 22C28 16 18 22 18 31C18 39 26 42 31 37C25 38 22 33 26 29C30 25 35 25 40 22z" fill="#5cb870"/><path d="M6 44C14 50 32 46 40 34C32 43 18 48 6 44z" fill="#d4dc78"/></svg>
<div><div class="wm1">极光下载站</div><div class="wm2">www.xz7.com</div></div>
</div>
</div>
<script>
(function(){
var s='';var f=function(x,y,w,h,c){return '<rect x="'+x+'" y="'+y+'" width="'+w+'" height="'+h+'" fill="'+c+'"/>';};
s+=f(0,0,478,16,'#c6c6c6')+f(478,0,194,16,'#fff')+f(674,0,36,16,'#c6c6c6');
for(var k=-14;k<=6;k++){var x=484+34*k;
 if(k!==0)s+='<text x="'+x+'" y="12" text-anchor="middle" font-family="Liberation Sans" font-size="10" fill="#444">'+Math.abs(k)+'</text>';
 if(k<6){s+=f(x+8,7.5,1,1.5,'#333')+f(x+16.5,5,1,6,'#333')+f(x+25,7.5,1,1.5,'#333');}
}
s+='<g fill="#fff" stroke="#888"><path d="M478.500 -3H489.500L484 3.500 489.500 8.500H478.500L484 3.500z"/><rect x="478.500" y="12" width="11" height="6.500"/><path d="M669.500 18.500V13L675 8.500l5.500 4.500v5.500z"/></g>';
document.getElementById('hrs').innerHTML=s;
var v=f(0,0,17,39,'#c6c6c6')+f(0,40,17,757,'#fff');
for(var j=-1;j<=23;j++){var y=39+33.85*j;
 if(j!==0)v+='<text transform="translate(12 '+y+') rotate(-90)" text-anchor="middle" font-family="Liberation Sans" font-size="10" fill="#333">'+Math.abs(j)+'</text>';
 v+=f(7.5,y+8,2.5,1,'#333')+f(5.5,y+16.5,6,1,'#333')+f(7.5,y+25,2.5,1,'#333');
}
document.getElementById('vrs').innerHTML=v;
})();
</script>
</body>
</html>
